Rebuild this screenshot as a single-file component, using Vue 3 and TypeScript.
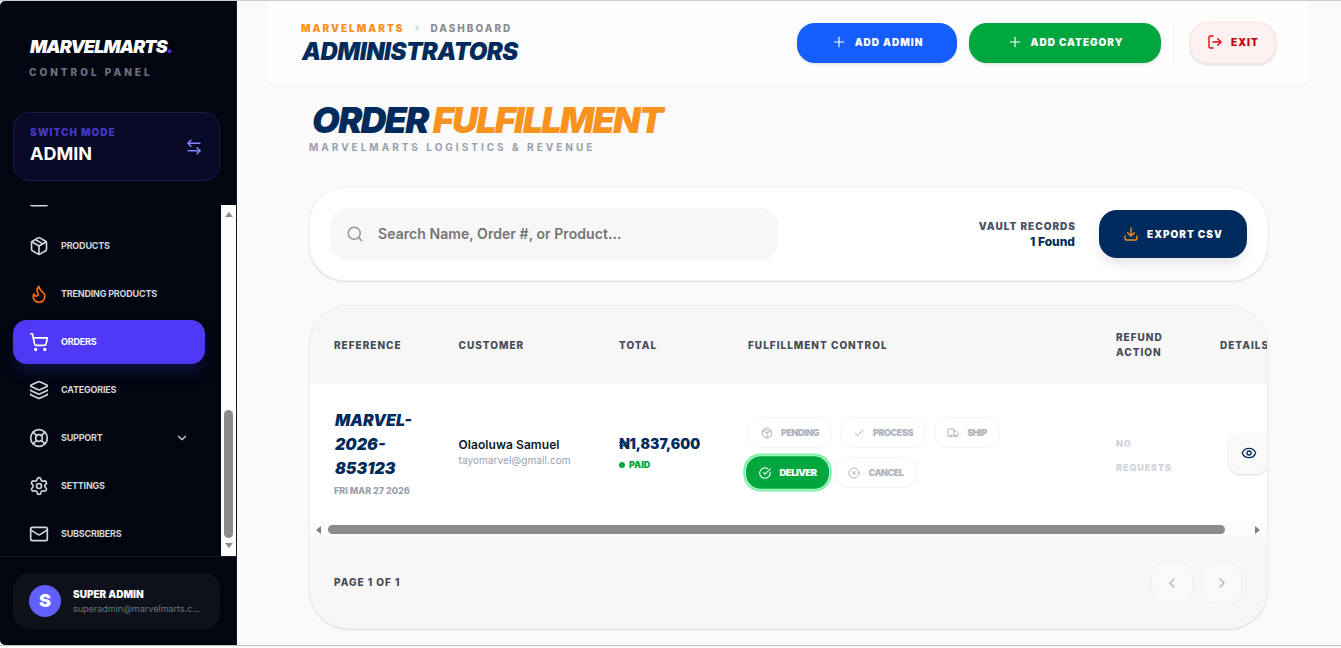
<template>
  <div class="window">
    <aside class="sidebar">
      <div class="brand">
        <div class="brand-name">MARVELMARTS<span>.</span></div>
        <div class="brand-sub">CONTROL PANEL</div>
      </div>

      <button class="mode-card">
        <span class="mode-text">
          <span class="mode-label">SWITCH MODE</span>
          <span class="mode-value">ADMIN</span>
        </span>
        <Icon name="swap" :size="18" />
      </button>

      <div class="nav-area">
        <nav class="nav">
          <a
            v-for="item in navItems"
            :key="item.icon"
            class="nav-item"
            :class="{ active: item.label === activeNav, hot: item.icon === 'flame' }"
            @click="activeNav = item.label"
          >
            <Icon :name="item.icon" :size="20" />
            <span class="nav-label">{{ item.label }}</span>
            <Icon v-if="item.expandable" name="chevronDown" :size="14" />
          </a>
        </nav>
        <div class="v-scroll">
          <i class="arrow up" />
          <i class="v-thumb" />
          <i class="arrow down" />
        </div>
      </div>

      <div class="user-area">
        <div class="user-card">
          <div class="avatar">S</div>
          <div class="user-text">
            <div class="user-name">SUPER ADMIN</div>
            <div class="user-mail">superadmin@marvelmarts.c...</div>
          </div>
        </div>
      </div>
    </aside>

    <main class="main">
      <div class="container">
        <header class="topbar">
          <div>
            <div class="crumbs">
              <span class="crumb-root">MARVELMARTS</span>
              <Icon name="chevronRight" :size="10" />
              <span class="crumb-page">DASHBOARD</span>
            </div>
            <h1>ADMINISTRATORS</h1>
          </div>
          <div class="actions">
            <button class="btn blue"><Icon name="plus" :size="14" />ADD ADMIN</button>
            <button class="btn green"><Icon name="plus" :size="14" />ADD CATEGORY</button>
            <span class="divider" />
            <button class="btn exit"><Icon name="logout" :size="16" /><span>EXIT</span></button>
          </div>
        </header>

        <div class="content">
          <h2>ORDER <span>FULFILLMENT</span></h2>
          <p class="subtitle">MARVELMARTS LOGISTICS &amp; REVENUE</p>

          <section class="toolbar">
            <label class="search">
              <Icon name="search" :size="18" />
              <input v-model="query" placeholder="Search Name, Order #, or Product...">
            </label>
            <div class="records">
              <div class="records-label">VAULT RECORDS</div>
              <div class="records-count">{{ orders.length }} Found</div>
            </div>
            <button class="export"><Icon name="download" :size="16" />EXPORT CSV</button>
          </section>

          <section class="card">
            <div class="table-wrap">
              <table>
                <colgroup>
                  <col v-for="col in columns" :key="col.label" :style="{ width: col.width + 'px' }">
                </colgroup>
                <thead>
                  <tr>
                    <th v-for="col in columns" :key="col.label">{{ col.label }}</th>
                  </tr>
                </thead>
                <tbody>
                  <tr v-for="order in orders" :key="order.reference">
                    <td>
                      <div class="reference">{{ order.reference }}</div>
                      <div class="date">{{ order.date }}</div>
                    </td>
                    <td>
                      <div class="customer">{{ order.customer }}</div>
                      <div class="email">{{ order.email }}</div>
                    </td>
                    <td>
                      <div class="total">{{ order.total }}</div>
                      <div class="paid"><i />PAID</div>
                    </td>
                    <td>
                      <div class="statuses">
                        <button
                          v-for="s in statuses"
                          :key="s.label"
                          class="status"
                          :class="{ current: s.label === order.status }"
                          :style="{ width: s.width + 'px' }"
                          @click="order.status = s.label"
                        >
                          <Icon :name="s.icon" :size="12" />{{ s.label }}
                        </button>
                      </div>
                    </td>
                    <td><div class="refund">NO REQUESTS</div></td>
                    <td><button class="view"><Icon name="eye" :size="16" /></button></td>
                  </tr>
                </tbody>
              </table>
            </div>
            <div class="h-scroll">
              <i class="arrow left" />
              <i class="h-thumb" />
              <i class="arrow right" />
            </div>
            <footer class="pager">
              <span>PAGE 1 OF 1</span>
              <div class="pager-buttons">
                <button disabled><Icon name="chevronLeft" :size="16" /></button>
                <button disabled><Icon name="chevronRight" :size="16" /></button>
              </div>
            </footer>
          </section>
        </div>
      </div>
    </main>
  </div>
</template>

<script setup lang="ts">
  import { h, ref } from 'vue'

  const iconPaths: Record<string, string[]> = {
    swap: ['M8 3 4 7l4 4', 'M4 7h16', 'm16 21 4-4-4-4', 'M20 17H4'],
    panel: ['M4 3h16a2 2 0 0 1 2 2v14.2a2 2 0 0 1-2 2H4a2 2 0 0 1-2-2V5a2 2 0 0 1 2-2z'],
    box: [
      'm7.5 4.27 9 5.15',
      'M21 8a2 2 0 0 0-1-1.73l-7-4a2 2 0 0 0-2 0l-7 4A2 2 0 0 0 3 8v8a2 2 0 0 0 1 1.73l7 4a2 2 0 0 0 2 0l7-4A2 2 0 0 0 21 16Z',
      'm3.3 7 8.7 5 8.7-5',
      'M12 22V12',
    ],
    flame: ['M8.5 14.5A2.5 2.5 0 0 0 11 12c0-1.38-.5-2-1-3-1.072-2.143-.224-4.054 2-6 .5 2.5 2 4.9 4 6.5 2 1.6 3 3.5 3 5.5a7 7 0 1 1-14 0c0-1.153.433-2.294 1-3a2.5 2.5 0 0 0 2.5 2.5z'],
    cart: [
      'M9 21a1 1 0 1 1-2 0 1 1 0 0 1 2 0z',
      'M20 21a1 1 0 1 1-2 0 1 1 0 0 1 2 0z',
      'M2.05 2.05h2l2.66 12.42a2 2 0 0 0 2 1.58h9.78a2 2 0 0 0 1.95-1.57l1.65-7.43H5.12',
    ],
    layers: [
      'M12.83 2.18a2 2 0 0 0-1.66 0L2.6 6.08a1 1 0 0 0 0 1.83l8.58 3.91a2 2 0 0 0 1.66 0l8.58-3.9a1 1 0 0 0 0-1.83z',
      'M2 12a1 1 0 0 0 .58.91l8.6 3.91a2 2 0 0 0 1.65 0l8.58-3.9A1 1 0 0 0 22 12',
      'M2 17a1 1 0 0 0 .58.91l8.6 3.91a2 2 0 0 0 1.65 0l8.58-3.9A1 1 0 0 0 22 17',
    ],
    buoy: [
      'M22 12a10 10 0 1 1-20 0 10 10 0 0 1 20 0z',
      'M16 12a4 4 0 1 1-8 0 4 4 0 0 1 8 0z',
      'm4.93 4.93 4.24 4.24',
      'm14.83 9.17 4.24-4.24',
      'm14.83 14.83 4.24 4.24',
      'm9.17 14.83-4.24 4.24',
    ],
    gear: [
      'M9.671 4.136a2.34 2.34 0 0 1 4.659 0 2.34 2.34 0 0 0 3.319 1.915 2.34 2.34 0 0 1 2.33 4.033 2.34 2.34 0 0 0 0 3.831 2.34 2.34 0 0 1-2.33 4.033 2.34 2.34 0 0 0-3.319 1.915 2.34 2.34 0 0 1-4.659 0 2.34 2.34 0 0 0-3.32-1.915 2.34 2.34 0 0 1-2.33-4.033 2.34 2.34 0 0 0 0-3.831A2.34 2.34 0 0 1 6.35 6.051a2.34 2.34 0 0 0 3.319-1.915',
      'M15 12a3 3 0 1 1-6 0 3 3 0 0 1 6 0z',
    ],
    mail: [
      'm22 7-8.991 5.727a2 2 0 0 1-2.009 0L2 7',
      'M4 4h16a2 2 0 0 1 2 2v12a2 2 0 0 1-2 2H4a2 2 0 0 1-2-2V6a2 2 0 0 1 2-2z',
    ],
    chevronDown: ['m6 9 6 6 6-6'],
    chevronRight: ['m9 18 6-6-6-6'],
    chevronLeft: ['m15 18-6-6 6-6'],
    plus: ['M4 12h16', 'M12 4v16'],
    logout: ['m16 17 5-5-5-5', 'M21 12H9', 'M9 21H5a2 2 0 0 1-2-2V5a2 2 0 0 1 2-2h4'],
    search: ['m21 21-4.34-4.34', 'M19 11a8 8 0 1 1-16 0 8 8 0 0 1 16 0z'],
    download: ['M12 15V3', 'M21 15v4a2 2 0 0 1-2 2H5a2 2 0 0 1-2-2v-4', 'm7 10 5 5 5-5'],
    check: ['M20 6 9 17l-5-5'],
    truck: [
      'M14 18V6a2 2 0 0 0-2-2H4a2 2 0 0 0-2 2v11a1 1 0 0 0 1 1h2',
      'M15 18H9',
      'M19 18h2a1 1 0 0 0 1-1v-3.65a1 1 0 0 0-.22-.624l-3.48-4.35A1 1 0 0 0 17.52 8H14',
      'M19 18a2 2 0 1 1-4 0 2 2 0 0 1 4 0z',
      'M9 18a2 2 0 1 1-4 0 2 2 0 0 1 4 0z',
    ],
    checkCircle: ['M21.801 10A10 10 0 1 1 17 3.335', 'm9 11 3 3L22 4'],
    xCircle: ['M22 12a10 10 0 1 1-20 0 10 10 0 0 1 20 0z', 'm15 9-6 6', 'm9 9 6 6'],
    eye: [
      'M2.062 12.348a1 1 0 0 1 0-.696 10.75 10.75 0 0 1 19.876 0 1 1 0 0 1 0 .696 10.75 10.75 0 0 1-19.876 0',
      'M15 12a3 3 0 1 1-6 0 3 3 0 0 1 6 0z',
    ],
  }

  function Icon (props: { name: string, size: number }) {
    return h(
      'svg',
      {
        'width': props.size,
        'height': props.size,
        'viewBox': '0 0 24 24',
        'fill': 'none',
        'stroke': 'currentColor',
        'stroke-width': 2,
        'stroke-linecap': 'round',
        'stroke-linejoin': 'round',
      },
      iconPaths[props.name].map(d => h('path', { d })),
    )
  }
  Icon.props = ['name', 'size']

  interface NavItem {
    icon: string
    label: string
    expandable?: boolean
  }

  // the list is scrolled: the first entry only shows its lower edge
  const navItems: NavItem[] = [
    { icon: 'panel', label: '' },
    { icon: 'box', label: 'PRODUCTS' },
    { icon: 'flame', label: 'TRENDING PRODUCTS' },
    { icon: 'cart', label: 'ORDERS' },
    { icon: 'layers', label: 'CATEGORIES' },
    { icon: 'buoy', label: 'SUPPORT', expandable: true },
    { icon: 'gear', label: 'SETTINGS' },
    { icon: 'mail', label: 'SUBSCRIBERS' },
  ]

  const columns = [
    { label: 'REFERENCE', width: 124.5 },
    { label: 'CUSTOMER', width: 160.5 },
    { label: 'TOTAL', width: 129 },
    { label: 'FULFILLMENT CONTROL', width: 368 },
    { label: 'REFUND ACTION', width: 104 },
    { label: 'DETAILS', width: 106 },
  ]

  const statuses = [
    { label: 'PENDING', icon: 'box', width: 84 },
    { label: 'PROCESS', icon: 'check', width: 86 },
    { label: 'SHIP', icon: 'truck', width: 66 },
    { label: 'DELIVER', icon: 'checkCircle', width: 79 },
    { label: 'CANCEL', icon: 'xCircle', width: 82 },
  ]

  const activeNav = ref('ORDERS')
  const query = ref('')
  const orders = ref([
    {
      reference: 'MARVEL-2026-853123',
      date: 'FRI MAR 27 2026',
      customer: 'Olaoluwa Samuel',
      email: 'tayomarvel@gmail.com',
      total: '₦1,837,600',
      status: 'DELIVER',
    },
  ])
</script>

<style>
body {
  margin: 0;
  background: #fbfbfb;
  overflow: hidden;
}
</style>

<style scoped>
* {
  box-sizing: border-box;
}

.window {
  display: flex;
  width: 1341px;
  height: 646px;
  border-top: 1px solid #cbcdd0;
  border-bottom: 1px solid #c2c3c5;
  font-family: Inter, "Noto Sans", sans-serif;
}

button {
  font-family: inherit;
  border: 0;
  padding: 0;
  cursor: pointer;
}

svg {
  flex: none;
}

/* sidebar */
.sidebar {
  display: flex;
  flex-direction: column;
  width: 237px;
  flex: none;
  background: #020610;
  border-right: 1px solid #15171f;
  border-radius: 5px 0 0 5px;
  color: #fff;
}

.brand {
  height: 111px;
  padding: 35px 0 0 29px;
}

.brand-name {
  padding-left: 1px;
  font-size: 18px;
  line-height: 22px;
  font-weight: 900;
  font-style: italic;
  letter-spacing: -0.9px;
}

.brand-name span {
  color: #4f39f6;
}

.brand-sub {
  margin-top: 6px;
  font-size: 10px;
  line-height: 16px;
  font-weight: 800;
  letter-spacing: 3px;
  color: #6a7282;
}

.mode-card {
  display: flex;
  align-items: center;
  justify-content: space-between;
  margin: 0 16px 0 13px;
  height: 69px;
  padding: 0 16px;
  border: 1px solid #1b1a48;
  border-radius: 16px;
  background: #080927;
  color: #7c86ff;
  text-align: left;
}

.mode-text {
  display: flex;
  flex-direction: column;
  margin-top: -1px;
}

.mode-label {
  font-size: 10px;
  line-height: 14px;
  font-weight: 900;
  letter-spacing: 1px;
  color: #4636c4;
}

.mode-value {
  padding-top: 1px;
  margin-bottom: -1px;
  font-size: 18px;
  line-height: 28px;
  font-weight: 700;
  letter-spacing: 0;
  color: #fff;
}

.nav-area {
  display: flex;
  height: 351px;
  margin-top: 24px;
}

.nav {
  display: flex;
  flex-direction: column;
  justify-content: flex-end;
  gap: 4px;
  width: 221px;
  padding: 0 16px 0 13px;
  overflow: hidden;
}

.nav-item {
  display: flex;
  align-items: center;
  gap: 12px;
  height: 44px;
  flex: none;
  padding: 0 16px;
  border-radius: 14px;
  color: #d1d5dc;
}

.nav-label {
  flex: 1;
  padding-bottom: 1px;
  font-size: 9px;
  font-weight: 700;
  letter-spacing: -0.2px;
}

.nav-item.hot svg {
  color: #ff6900;
}

.nav-item.active {
  background: #4f39f6;
  color: #fff;
  box-shadow: 0 10px 15px -3px rgba(79, 57, 246, 0.22);
}

.v-scroll {
  display: flex;
  flex-direction: column;
  align-items: center;
  width: 15px;
  padding: 7px 0 8px;
  background: #fcfcfc;
}

.v-thumb {
  width: 9px;
  height: 128px;
  margin: auto 0 5px;
  border-radius: 5px;
  background: #8b8b8b;
}

.arrow {
  width: 0;
  height: 0;
  border: 4.5px solid transparent;
}

.arrow.up {
  border-top: 0;
  border-bottom: 5px solid #8b8b8b;
}

.arrow.down {
  border-bottom: 0;
  border-top: 5px solid #8b8b8b;
}

.arrow.left {
  border-left: 0;
  border-right: 5px solid #7f7f7f;
}

.arrow.right {
  border-right: 0;
  border-left: 5px solid #7f7f7f;
}

.user-area {
  flex: 1;
  padding: 16px 16px 0 13px;
  border-top: 1px solid #161a24;
}

.user-card {
  display: flex;
  align-items: center;
  gap: 12px;
  height: 56px;
  padding: 0 16px;
  border-radius: 16px;
  background: #0e1119;
}

.avatar {
  width: 32px;
  height: 32px;
  flex: none;
  border-radius: 50%;
  background: #615fff;
  font-size: 18px;
  font-weight: 900;
  line-height: 32px;
  text-align: center;
}

.user-text {
  min-width: 0;
}

.user-name {
  font-size: 10px;
  line-height: 15px;
  font-weight: 900;
}

.user-mail {
  font-size: 9px;
  line-height: 14px;
  color: #6a7282;
  white-space: nowrap;
}

/* page */
.main {
  flex: 1;
  min-width: 0;
  padding: 0 33px 0 31px;
  background: #f9fafc;
}

.container {
  height: 100%;
  background: #fafafa;
}

.topbar {
  display: flex;
  align-items: center;
  justify-content: space-between;
  height: 84px;
  padding: 0 32px 0 33px;
  background: #fdfdfd;
  border-bottom: 1px solid #f2f2f3;
}

.crumbs {
  display: flex;
  align-items: center;
  gap: 8px;
  font-size: 10px;
  line-height: 14px;
  font-weight: 900;
  letter-spacing: 2px;
  color: #99a1af;
}

.crumb-root {
  color: #f7931e;
}

.crumb-page {
  font-weight: 800;
  color: #8a8c92;
}

h1 {
  margin: 3px 0 -1px 1px;
  font-size: 24px;
  line-height: 28px;
  font-weight: 900;
  font-style: italic;
  letter-spacing: -0.55px;
  color: #002b5c;
}

.actions {
  display: flex;
  align-items: center;
  gap: 12px;
}

.btn {
  display: flex;
  align-items: center;
  justify-content: center;
  gap: 9px;
  height: 40px;
  padding: 0 0 1px 1px;
  border-radius: 18px;
  font-size: 10px;
  font-weight: 900;
  letter-spacing: 1px;
  color: #fff;
  box-shadow: 0 1px 3px rgba(0, 0, 0, 0.14);
}

.btn.blue {
  width: 160px;
  background: #155dfc;
}

.btn.green {
  width: 192px;
  background: #00a63e;
}

.divider {
  width: 1px;
  height: 40px;
  margin-right: 4px;
  background: #f3f4f6;
}

.btn.exit {
  width: 86px;
  height: 42px;
  gap: 8px;
  padding-left: 0;
  border: 1px solid #fbe3e1;
  background: #fdf2f1;
  color: #e7000b;
}

.btn.exit span {
  color: #c10007;
}

.content {
  padding: 15px 40px 0 41px;
}

h2 {
  margin: 0 0 0 3px;
  font-size: 36px;
  line-height: 40px;
  font-weight: 900;
  font-style: italic;
  letter-spacing: -1.8px;
  color: #002b5c;
}

h2 span {
  color: #f7931e;
}

.subtitle {
  margin: 0;
  font-size: 10px;
  line-height: 14px;
  font-weight: 700;
  letter-spacing: 3px;
  color: #99a1af;
}

.toolbar {
  display: flex;
  align-items: center;
  height: 94px;
  margin-top: 33px;
  padding: 0 20px;
  border: 1px solid #f3f4f6;
  border-radius: 36px;
  background: #fff;
  box-shadow: 0 1px 2px rgba(0, 0, 0, 0.12);
}

.search {
  display: flex;
  align-items: center;
  gap: 14px;
  width: 448px;
  height: 52px;
  padding: 0 16px;
  border-radius: 18px;
  background: #f7f7f7;
  color: #90959e;
}

.search input {
  flex: 1;
  padding: 0 0 1px;
  border: 0;
  outline: 0;
  background: none;
  font: 600 14px Inter, sans-serif;
  letter-spacing: 0.06px;
  color: #333;
}

.search input::placeholder {
  color: #757575;
}

.records {
  margin-left: auto;
  text-align: right;
}

.records-label {
  margin-right: -1px;
  font-size: 10px;
  line-height: 15px;
  font-weight: 900;
  letter-spacing: 1px;
  color: #4a5565;
}

.records-count {
  font-size: 12px;
  line-height: 16px;
  font-weight: 800;
  color: #002b5c;
}

.export {
  display: flex;
  align-items: center;
  justify-content: center;
  gap: 8px;
  width: 148px;
  height: 48px;
  margin-left: 24px;
  border-radius: 18px;
  background: #002b5c;
  color: #fff;
  font-size: 10px;
  font-weight: 900;
  letter-spacing: 1px;
  box-shadow: 0 8px 14px -3px rgba(0, 0, 0, 0.12);
}

.export svg {
  color: #f7931e;
}

.card {
  height: 324px;
  margin-top: 24px;
  border: 1px solid #f0f1f2;
  border-radius: 40px;
  overflow: hidden;
  background: #f7f7f7;
  box-shadow: 0 1px 2px rgba(0, 0, 0, 0.12);
}

.table-wrap {
  overflow: hidden;
}

table {
  width: 992px;
  table-layout: fixed;
  border-collapse: collapse;
}

th {
  height: 78px;
  padding: 0 0 0 24px;
  text-align: left;
  font-size: 10px;
  line-height: 15px;
  font-weight: 800;
  letter-spacing: 1px;
  color: #454b56;
}

th:nth-child(5) {
  padding-right: 20px;
}

td {
  height: 138px;
  padding: 0 0 0 24px;
  background: #fff;
}

td:nth-child(2) {
  padding-bottom: 2px;
}

.reference {
  width: 84px;
  padding-left: 1px;
  font-size: 16px;
  line-height: 24px;
  font-weight: 900;
  font-style: italic;
  color: #002b5c;
}

.date {
  margin-top: 4px;
  font-size: 9px;
  line-height: 14px;
  font-weight: 800;
  white-space: nowrap;
  color: #99a1af;
}

.customer {
  font-size: 12px;
  line-height: 16px;
  font-weight: 600;
  letter-spacing: 0.06px;
  color: #101828;
}

.email {
  font-size: 10px;
  line-height: 15px;
  letter-spacing: 0.08px;
  color: #99a1af;
}

.total {
  font-size: 14px;
  line-height: 20px;
  font-weight: 900;
  color: #002b5c;
}

.paid {
  display: flex;
  align-items: center;
  gap: 4px;
  margin-top: 4px;
  font-size: 9px;
  line-height: 14px;
  font-weight: 900;
  color: #00a63e;
}

.paid i {
  width: 6px;
  height: 6px;
  border-radius: 50%;
  background: #00a63e;
}

.statuses {
  display: flex;
  flex-wrap: wrap;
  gap: 9px 8px;
  width: 290px;
  margin-top: -1px;
}

.status {
  display: flex;
  align-items: center;
  justify-content: center;
  gap: 8px;
  height: 31px;
  border: 1px solid #f3f4f6;
  border-radius: 14px;
  background: #fff;
  color: #aeb3bd;
  font-size: 9px;
  font-weight: 900;
  letter-spacing: -0.45px;
}

.status.current {
  border-color: #00a63e;
  background: #00a63e;
  color: #fff;
  transform: scale(1.05);
  box-shadow: 0 0 0 0.8px #d9f9e4, 0 0 0 2.6px #7bf1a8;
}

.refund {
  width: 60px;
  padding-top: 5px;
  font-size: 9px;
  line-height: 24px;
  font-weight: 900;
  letter-spacing: 0.9px;
  color: #d1d5dc;
}

.view {
  display: flex;
  align-items: center;
  justify-content: center;
  width: 41px;
  height: 41px;
  margin-left: 8px;
  border-radius: 14px;
  background: #f9f9f9;
  color: #002b5c;
  box-shadow: 0 1px 3px rgba(0, 0, 0, 0.15);
}

.h-scroll {
  display: flex;
  align-items: center;
  height: 15px;
  padding: 0 7px 0 6px;
  background: #fcfcfc;
}

.h-thumb {
  width: 897px;
  height: 9px;
  margin: 0 auto 0 7px;
  border-radius: 5px;
  background: #8b8b8b;
}

.pager {
  display: flex;
  align-items: center;
  justify-content: space-between;
  height: 91px;
  padding: 0 24px 1px;
  border-top: 1px solid #f3f4f6;
  font-size: 10px;
  font-weight: 800;
  letter-spacing: 1px;
  color: #454b56;
}

.pager span {
  padding-bottom: 2px;
}

.pager-buttons {
  display: flex;
  gap: 8px;
}

.pager-buttons button {
  display: flex;
  align-items: center;
  justify-content: center;
  width: 42px;
  height: 42px;
  border: 1px solid #f0f0f1;
  border-radius: 14px;
  background: #f9f9f9;
  color: #b3b3b5;
}
</style>
